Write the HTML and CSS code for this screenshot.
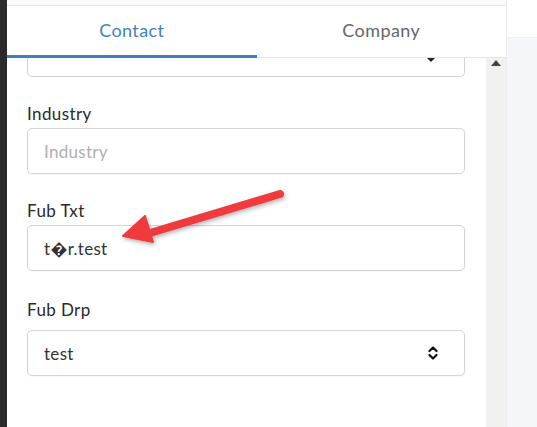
FILE: index.html
```html
<!DOCTYPE html>
<html>
<head>
<meta charset="utf-8">
<link rel="stylesheet" href="styles.css">
</head>
<body>
<div class="app">
  <div class="edge"></div>
  <div class="main">
    <div class="topstrip"></div>
    <div class="tabs">
      <div class="tab active">Contact</div>
      <div class="tab">Company</div>
    </div>
    <div class="body">
      <div class="content">
        <div class="cut-select">
          <svg class="caret" width="8" height="4" viewBox="0 0 8 4"><path d="M0 0h8L4 4z" fill="#222"/></svg>
        </div>
        <div class="field">
          <label class="lbl">Industry</label>
          <div class="input placeholder">Industry</div>
        </div>
        <div class="field">
          <label class="lbl">Fub Txt</label>
          <div class="input value">t&#xFFFD;r.test</div>
        </div>
        <div class="field field-last">
          <label class="lbl">Fub Drp</label>
          <div class="input select value">test
            <svg class="updown" width="10" height="16" viewBox="0 0 10 16"><path d="M1.5 6 L5 2.5 L8.5 6 M1.5 10 L5 13.5 L8.5 10" fill="none" stroke="#111" stroke-width="2.2" stroke-linecap="round" stroke-linejoin="round"/></svg>
          </div>
        </div>
        <svg class="arrow" width="200" height="80" viewBox="0 0 200 80">
          <defs>
            <filter id="sh" x="-20%" y="-40%" width="140%" height="180%">
              <feDropShadow dx="1" dy="2" stdDeviation="2" flood-color="#000" flood-opacity="0.3"/>
            </filter>
          </defs>
          <g filter="url(#sh)" fill="#ef3b3c" stroke="#ef3b3c">
            <line x1="170" y1="15" x2="40" y2="54" stroke-width="8" stroke-linecap="round"/>
            <path d="M13 57 L35 37 L43 63 Z" stroke-width="2" stroke-linejoin="round"/>
          </g>
        </svg>
      </div>
      <div class="scrollbar">
        <svg class="up" width="10" height="6" viewBox="0 0 10 6"><path d="M0 6L5 0L10 6z" fill="#444"/></svg>
      </div>
    </div>
  </div>
  <div class="side">
    <div class="side-top"></div>
    <div class="side-rest"></div>
  </div>
</div>
</body>
</html>
```

FILE: styles.css
```css
html, body {
  margin: 0;
  padding: 0;
  width: 537px;
  height: 427px;
  overflow: hidden;
  background: #fff;
  font-family: "Lato", "Open Sans", sans-serif;
}
.app {
  display: flex;
  height: 427px;
}
.edge {
  width: 7px;
  background: #2b2b2b;
  flex: none;
}
.main {
  width: 499px;
  flex: none;
  display: flex;
  flex-direction: column;
}
.topstrip {
  height: 5px;
  background: #fafafa;
  border-bottom: 1px solid #e4e4e4;
}
.tabs {
  display: flex;
  height: 52px;
  background: #fff;
}
.tab {
  flex: 1;
  display: flex;
  align-items: center;
  justify-content: center;
  font-size: 18px;
  letter-spacing: 0.4px;
  color: #666;
  border-bottom: 1px solid #e6e6e6;
  padding-bottom: 4px;
  box-sizing: border-box;
}
.tab.active {
  color: #3f82c4;
  border-bottom: 3px solid #3a80c2;
  padding-bottom: 2px;
}
.body {
  flex: 1;
  display: flex;
  min-height: 0;
}
.content {
  position: relative;
  width: 479px;
  padding: 0 21px 0 20px;
  box-sizing: border-box;
}
.cut-select {
  position: relative;
  height: 18px;
  border: 1px solid #d3d3d3;
  border-top: none;
  border-radius: 0 0 5px 5px;
}
.caret {
  position: absolute;
  right: 29px;
  top: 0;
}
.field {
  margin-top: 27px;
}
.field-last {
  margin-top: 29px;
}
.lbl {
  display: block;
  font-size: 17px;
  letter-spacing: 0.4px;
  line-height: 20px;
  color: #2a2a2a;
  margin-bottom: 4px;
}
.input {
  height: 46px;
  border: 1px solid #d3d3d3;
  border-radius: 5px;
  box-sizing: border-box;
  padding: 0 16px;
  display: flex;
  align-items: center;
  font-size: 17px;
  letter-spacing: 0.3px;
  box-shadow: 0 1px 2px rgba(0,0,0,0.04);
}
.placeholder {
  color: #b0b0b0;
}
.value {
  color: #333;
}
.select {
  margin-top: 10px;
  justify-content: space-between;
  padding-right: 26px;
}
.updown {
  display: block;
}
.arrow {
  position: absolute;
  left: 103px;
  top: 121px;
}
.scrollbar {
  width: 20px;
  background: #f1f1f1;
  display: flex;
  justify-content: center;
  align-items: flex-start;
}
.up {
  margin-top: 2px;
}
.side {
  flex: 1;
  display: flex;
  flex-direction: column;
  border-left: 1px solid #ececec;
}
.side-top {
  height: 37px;
  background: #fff;
  border-bottom: 1px solid #eef0f3;
}
.side-rest {
  flex: 1;
  background: #f4f6f9;
}
```
